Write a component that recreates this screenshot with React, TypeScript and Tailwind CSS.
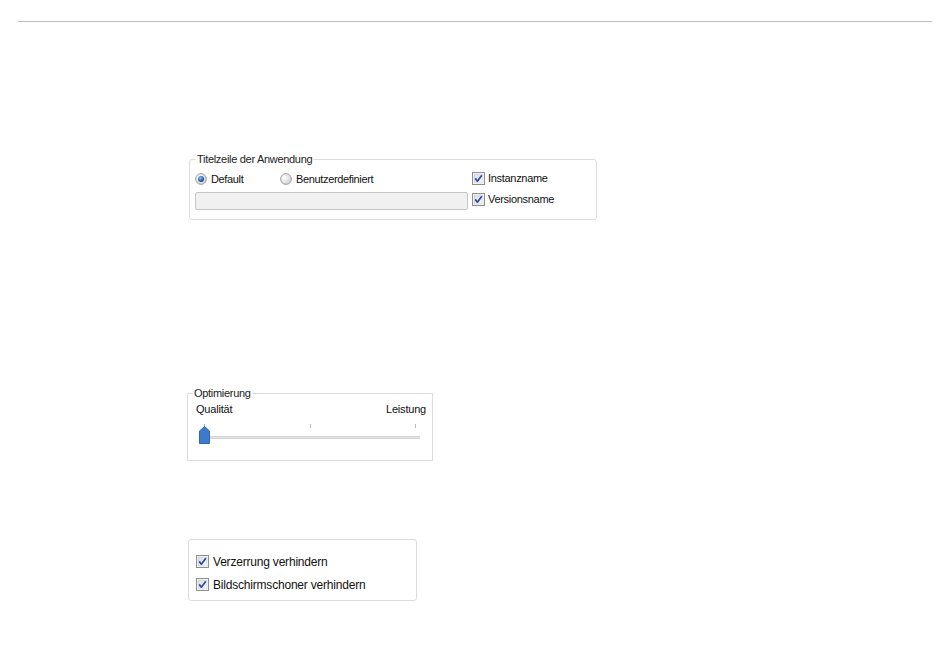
import * as React from 'react';

const font = { fontFamily: '"Liberation Sans", Arial, sans-serif' };

const CheckBox: React.FC = () => (
  <svg width="13" height="13" viewBox="0 0 13 13" className="shrink-0">
    <defs>
      <linearGradient id="cbg" x1="0" y1="0" x2="1" y2="1">
        <stop offset="0" stopColor="#d8dde6" />
        <stop offset="1" stopColor="#f7f8fa" />
      </linearGradient>
    </defs>
    <rect x="0.5" y="0.5" width="12" height="12" fill="#fff" stroke="#8e8f8f" />
    <rect x="2" y="2" width="9" height="9" fill="url(#cbg)" stroke="#c4c9d3" strokeWidth="0.6" />
    <path d="M3.2 6.4 L5.4 9.2 L9.8 3.2" fill="none" stroke="#2c4d9c" strokeWidth="1.7" strokeLinejoin="round" />
  </svg>
);

const Radio: React.FC<{ checked?: boolean }> = ({ checked }) => (
  <svg width="12" height="12" viewBox="0 0 12 12" className="shrink-0">
    <defs>
      <radialGradient id="rbg" cx="0.35" cy="0.35" r="0.8">
        <stop offset="0" stopColor="#ffffff" />
        <stop offset="1" stopColor="#c9c9c9" />
      </radialGradient>
      <radialGradient id="rdot" cx="0.4" cy="0.35" r="0.7">
        <stop offset="0" stopColor="#8fc6f0" />
        <stop offset="0.6" stopColor="#2a6fb6" />
        <stop offset="1" stopColor="#123f74" />
      </radialGradient>
    </defs>
    <circle cx="6" cy="6" r="5.4" fill="url(#rbg)" stroke="#9a9a9a" strokeWidth="0.9" />
    {checked && <circle cx="6" cy="6" r="3" fill="url(#rdot)" />}
  </svg>
);

const Thumb: React.FC = () => (
  <svg width="11" height="18" viewBox="0 0 11 18">
    <path d="M0.5 17.5 V5 L5.5 0.5 L10.5 5 V17.5 Z" fill="#3c7bcc" stroke="#2f66ad" />
  </svg>
);

export default function App() {
  return (
    <div className="w-[950px] h-[652px] bg-white text-[#111] overflow-hidden" style={font}>
      <div className="pt-[21px] pl-[18px]">
        <div className="w-[914px] h-px bg-[#bdbdbd]" />
      </div>

      {/* Titelzeile */}
      <fieldset className="ml-[189px] mt-[131px] w-[408px] border border-[#dadde2] rounded-[3px] pl-[5px] pr-2 pb-[9px]">
        <legend className="ml-[1px] px-[1px] text-[11px] leading-[13px] text-[#222] tracking-[-0.3px]">
          Titelzeile der Anwendung
        </legend>
        <div className="flex mt-[6px]">
          <div className="w-[273px] flex flex-col gap-[6px]">
            <div className="flex items-center h-[14px] text-[11px] tracking-[-0.35px]">
              <div className="flex items-center gap-[4px] w-[85px]">
                <Radio checked />
                <span>Default</span>
              </div>
              <div className="flex items-center gap-[4px]">
                <Radio />
                <span>Benutzerdefiniert</span>
              </div>
            </div>
            <div className="h-[18px] bg-[#f0f0f0] border border-[#c6c6c6] rounded-[2px]" />
          </div>
          <div className="ml-[4px] flex flex-col gap-[8px] text-[11px] tracking-[-0.3px]">
            <div className="flex items-center gap-[3px] h-[13px]">
              <CheckBox />
              <span>Instanzname</span>
            </div>
            <div className="flex items-center gap-[3px] h-[13px]">
              <CheckBox />
              <span>Versionsname</span>
            </div>
          </div>
        </div>
      </fieldset>

      {/* Optimierung */}
      <fieldset className="ml-[187px] mt-[167px] w-[246px] h-[74px] border border-[#dcdcdc] pl-[8px] pr-[6px]">
        <legend className="ml-[-3px] px-[1px] text-[11px] leading-[13px] text-[#222] tracking-[-0.3px]">
          Optimierung
        </legend>
        <div className="flex justify-between text-[11px] leading-[13px] tracking-[-0.2px] mt-[3px]">
          <span>Qualität</span>
          <span>Leistung</span>
        </div>
        <div className="relative h-[30px] mt-[6px] mr-[4px]">
          <div className="flex justify-between pl-[8px] pr-[6px] pt-[2px]">
            <div className="w-px h-[4px] bg-[#b8b8b8]" />
            <div className="w-px h-[4px] bg-[#b8b8b8]" />
            <div className="w-px h-[4px] bg-[#b8b8b8]" />
          </div>
          <div className="ml-[9px] mr-[2px] mt-[8px] h-[3px] bg-[#e3e3e3] border-y border-[#d4d4d4]" />
          <div className="absolute left-[3px] top-[4px]">
            <Thumb />
          </div>
        </div>
      </fieldset>

      {/* Verzerrung */}
      <div className="ml-[188px] mt-[78px] w-[229px] h-[62px] border border-[#d6dde3] rounded-[3px] pl-[7px] pt-[15px] flex flex-col gap-[10px] text-[12px] tracking-[-0.2px]">
        <div className="flex items-center gap-[4px] h-[13px]">
          <CheckBox />
          <span>Verzerrung verhindern</span>
        </div>
        <div className="flex items-center gap-[4px] h-[13px]">
          <CheckBox />
          <span>Bildschirmschoner verhindern</span>
        </div>
      </div>
    </div>
  );
}
